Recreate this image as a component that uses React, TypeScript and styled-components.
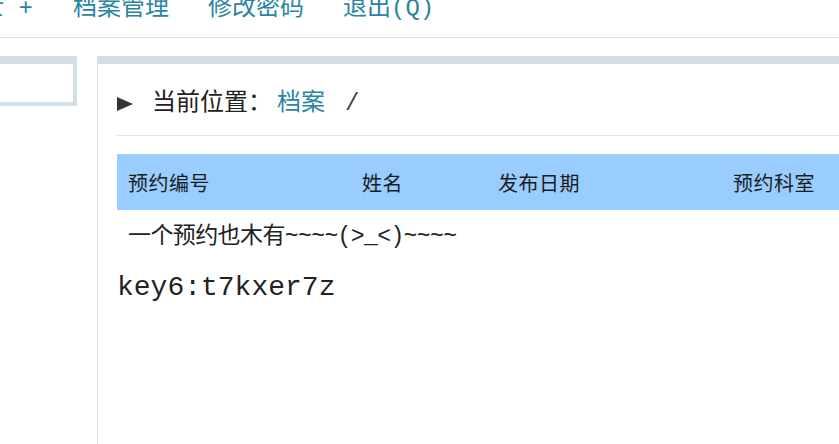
import React from 'react'
import styled, { createGlobalStyle } from 'styled-components'

const GlobalStyle = createGlobalStyle`
	html, body {
		margin: 0;
		padding: 0;
		background: #fff;
		overflow: hidden;
	}
	body {
		font-family: 'Liberation Mono', 'Noto Sans CJK SC', monospace;
		color: #222;
	}
`

const Page = styled.div`
	width: 839px;
	height: 444px;
	overflow: hidden;
`

const Nav = styled.nav`
	display: flex;
	gap: 40px;
	box-sizing: border-box;
	height: 41px;
	margin-top: -3px;
	border-bottom: 1px solid #d9e1e6;
	font-size: 24px;
	line-height: 24px;
	color: #2a84a2;
	white-space: nowrap;
`

const Greeting = styled.span`
	display: flex;
	justify-content: flex-end;
	width: 33px;
`

const NavLink = styled.a`
	width: 95px;
	color: inherit;
	text-decoration: none;
	cursor: pointer;
`

const Body = styled.div`
	display: flex;
	gap: 20px;
	padding-top: 18px;
`

const Sidebar = styled.aside`
	box-sizing: border-box;
	flex: none;
	width: 100px;
	height: 50px;
	margin-left: -23px;
	border: 4px solid #d3dfe6;
	border-top-width: 8px;
`

const Panel = styled.main`
	flex: 1;
	min-width: 0;
	min-height: 420px;
	padding-left: 19px;
	border-top: 8px solid #d3dfe6;
	border-left: 1px solid #d8e0e5;
`

const Crumbs = styled.div`
	display: flex;
	align-items: center;
	padding-top: 28px;
	height: 24px;
	font-size: 24px;
	line-height: 24px;
	white-space: nowrap;
`

const Arrow = styled.span`
	width: 0;
	height: 0;
	margin-right: 19px;
	border-top: 7px solid transparent;
	border-bottom: 7px solid transparent;
	border-left: 16px solid #333;
`

const CrumbLink = styled.a<{ $gap: number }>`
	margin-left: ${({ $gap }) => $gap}px;
	color: #2a84a2;
	text-decoration: none;
`

const Slash = styled.span`
	margin-left: 20px;
	color: #444;
`

const Rule = styled.hr`
	margin: 19px 0 0;
	border: 0;
	border-top: 1px solid #dfe6ea;
`

const Table = styled.div`
	margin-top: 18px;
`

const HeadRow = styled.div`
	display: grid;
	grid-template-columns: 234px 136px 235px 1fr;
	align-items: center;
	height: 56px;
	background: #99ccff;
	font-size: 20px;
	letter-spacing: 0.5px;
	color: #1c1c1c;
	white-space: nowrap;
`

const HeadCell = styled.div`
	padding-left: 11px;
`

const EmptyRow = styled.div`
	height: 54px;
	padding-left: 11px;
	font-size: 23px;
	line-height: 54px;
	letter-spacing: -0.6px;
	white-space: nowrap;
`

const KeyLine = styled.div`
	font-size: 28px;
	line-height: 48px;
	color: #222;
`

const columns = ['预约编号', '姓名', '发布日期', '预约科室']

export default function App() {
	return (
		<Page>
			<GlobalStyle />
			<Nav>
				<Greeting>女士 +</Greeting>
				<NavLink>档案管理</NavLink>
				<NavLink>修改密码</NavLink>
				<NavLink>退出(Q)</NavLink>
			</Nav>
			<Body>
				<Sidebar />
				<Panel>
					<Crumbs>
						<Arrow />
						当前位置：
						<CrumbLink $gap={5}>档案</CrumbLink>
						<Slash>/</Slash>
					</Crumbs>
					<Rule />
					<Table>
						<HeadRow>
							{columns.map((c) => (
								<HeadCell key={c}>{c}</HeadCell>
							))}
						</HeadRow>
						<EmptyRow>一个预约也木有~~~~(&gt;_&lt;)~~~~</EmptyRow>
					</Table>
					<KeyLine>key6:t7kxer7z</KeyLine>
				</Panel>
			</Body>
		</Page>
	)
}
